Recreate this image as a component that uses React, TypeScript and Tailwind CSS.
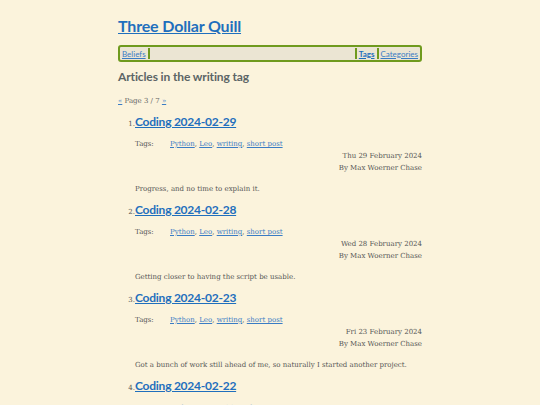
const posts = [
  { n: 1, title: "Coding 2024-02-29", date: "Thu 29 February 2024", summary: "Progress, and no time to explain it." },
  { n: 2, title: "Coding 2024-02-28", date: "Wed 28 February 2024", summary: "Getting closer to having the script be usable." },
  { n: 3, title: "Coding 2024-02-23", date: "Fri 23 February 2024", summary: "Got a bunch of work still ahead of me, so naturally I started another project." },
  { n: 4, title: "Coding 2024-02-22", date: "Thu 22 February 2024", summary: "More work." },
];

const sans = "font-['Lato','Noto_Sans',sans-serif]";
const serif = "font-['DejaVu_Serif','Liberation_Serif',serif]";

export default function App() {
  return (
    <div className={`min-h-[405px] bg-[#fbf3dc] ${serif} text-[#555]`}>
      <div className="w-[304px] pt-[14px] ml-[118px]">
        <h1 className={`${sans} text-[16px] leading-[24px] font-bold tracking-[-0.01em]`}>
          <a href="#" className="text-[#1f6fbd] underline">Three Dollar Quill</a>
        </h1>

        <nav className={`${sans} mt-[7px] flex h-[17px] items-center rounded-[3px] border-2 border-[#6f9a1e] bg-[#ebe5d3] text-[8px]`}>
          <a href="#" className="pl-[2px] pr-[2px] text-[#3a7cc4] underline">Beliefs</a>
          <span className="h-[11px] w-[2px] bg-[#6f9a1e]" />
          <span className="flex-1" />
          <span className="h-[11px] w-[2px] bg-[#6f9a1e]" />
          <a href="#" className="px-[2px] font-bold text-[#1f6fbd] underline">Tags</a>
          <span className="h-[11px] w-[2px] bg-[#6f9a1e]" />
          <a href="#" className="px-[2px] text-[#3a7cc4] underline">Categories</a>
        </nav>

        <h2 className={`${sans} mt-[6px] text-[12px] leading-[18px] font-bold tracking-[-0.01em] text-[#5c6566]`}>Articles in the writing tag</h2>

        <p className="mt-[10px] text-[7px] leading-[10px] text-[#666]">
          <a href="#" className="text-[#3a7cc4] underline">«</a> Page 3 / 7 <a href="#" className="text-[#3a7cc4] underline">»</a>
        </p>

        <ol className="mt-[7px]">
          {posts.map((p) => (
            <li key={p.n} className="mb-[7px]">
              <div className="flex items-baseline">
                <span className="w-[17px] pl-[10px] text-right text-[7px] text-[#555]">{p.n}.</span>
                <a href="#" className={`${sans} text-[12px] leading-[18px] font-bold tracking-[-0.02em] text-[#1f6fbd] underline`}>{p.title}</a>
              </div>
              <div className="ml-[17px] mt-[8px] flex text-[7px] leading-[10px]">
                <span className="w-[35px]">Tags:</span>
                <span>
                  <a href="#" className="text-[#3a7cc4] underline">Python</a>,{" "}
                  <a href="#" className="text-[#3a7cc4] underline">Leo</a>,{" "}
                  <a href="#" className="text-[#3a7cc4] underline">writing</a>,{" "}
                  <a href="#" className="text-[#3a7cc4] underline">short post</a>
                </span>
              </div>
              <div className="mt-[1px] text-right text-[7px] leading-[12px]">
                <div>{p.date}</div>
                <div>By Max Woerner Chase</div>
              </div>
              <p className="ml-[17px] mt-[10px] text-[7px] leading-[10px]">{p.summary}</p>
            </li>
          ))}
        </ol>
      </div>
    </div>
  );
}
